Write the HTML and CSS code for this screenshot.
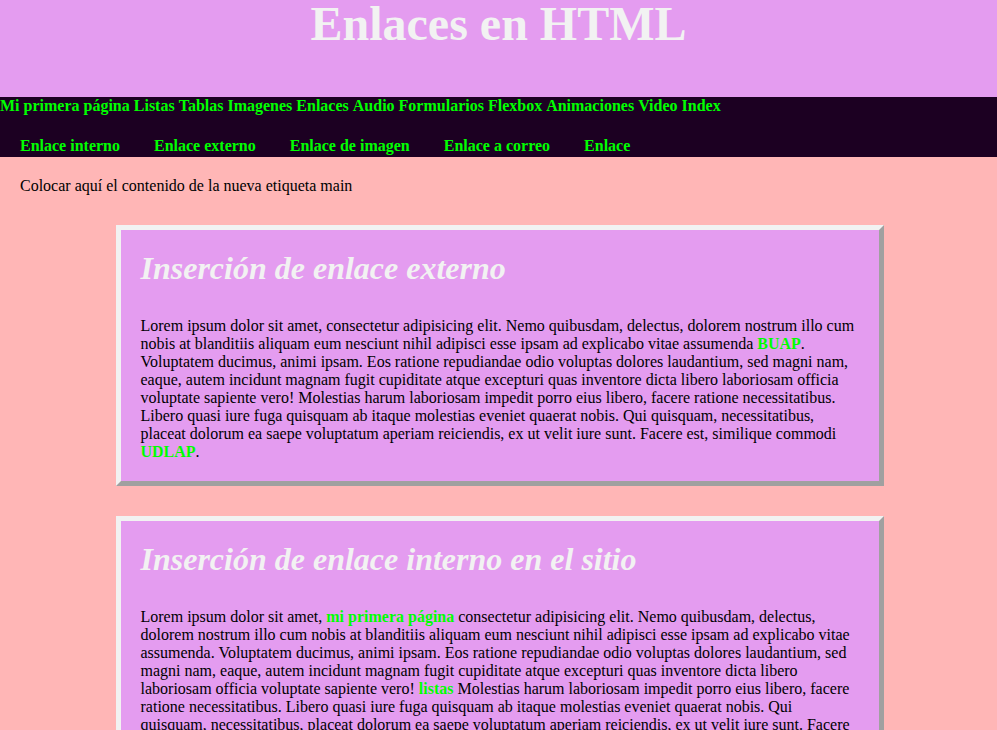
FILE: index.html
```html
<!DOCTYPE html>
<html lang="es">
<head>
<meta charset="utf-8">
<title>Enlaces en HTML</title>
<link rel="stylesheet" href="styles.css">
</head>
<body>
<header class="site-header">
  <h1 class="site-title">Enlaces en HTML</h1>
</header>
<nav class="site-nav">
  <div class="nav-main">
    <a href="#">Mi primera página</a> <a href="#">Listas</a> <a href="#">Tablas</a> <a href="#">Imagenes</a> <a href="#">Enlaces</a> <a href="#">Audio</a> <a href="#">Formularios</a> <a href="#">Flexbox</a> <a href="#">Animaciones</a> <a href="#">Video</a> <a href="#">Index</a>
  </div>
  <ul class="nav-sub">
    <li><a href="#">Enlace interno</a></li>
    <li><a href="#">Enlace externo</a></li>
    <li><a href="#">Enlace de imagen</a></li>
    <li><a href="#">Enlace a correo</a></li>
    <li><a href="#">Enlace</a></li>
  </ul>
</nav>
<main class="content">
  <div class="intro">Colocar aquí el contenido de la nueva etiqueta main</div>
  <article class="card">
    <h2 class="card-title">Inserción de enlace externo</h2>
    <p class="card-text">Lorem ipsum dolor sit amet, consectetur adipisicing elit. Nemo quibusdam, delectus, dolorem nostrum illo cum nobis at blanditiis aliquam eum nesciunt nihil adipisci esse ipsam ad explicabo vitae assumenda <a href="#">BUAP</a>. Voluptatem ducimus, animi ipsam. Eos ratione repudiandae odio voluptas dolores laudantium, sed magni nam, eaque, autem incidunt magnam fugit cupiditate atque excepturi quas inventore dicta libero laboriosam officia voluptate sapiente vero! Molestias harum laboriosam impedit porro eius libero, facere ratione necessitatibus. Libero quasi iure fuga quisquam ab itaque molestias eveniet quaerat nobis. Qui quisquam, necessitatibus, placeat dolorum ea saepe voluptatum aperiam reiciendis, ex ut velit iure sunt. Facere est, similique commodi <a href="#">UDLAP</a>.</p>
  </article>
  <article class="card">
    <h2 class="card-title">Inserción de enlace interno en el sitio</h2>
    <p class="card-text">Lorem ipsum dolor sit amet, <a href="#">mi primera página</a> consectetur adipisicing elit. Nemo quibusdam, delectus, dolorem nostrum illo cum nobis at blanditiis aliquam eum nesciunt nihil adipisci esse ipsam ad explicabo vitae assumenda. Voluptatem ducimus, animi ipsam. Eos ratione repudiandae odio voluptas dolores laudantium, sed magni nam, eaque, autem incidunt magnam fugit cupiditate atque excepturi quas inventore dicta libero laboriosam officia voluptate sapiente vero! <a href="#">listas</a> Molestias harum laboriosam impedit porro eius libero, facere ratione necessitatibus. Libero quasi iure fuga quisquam ab itaque molestias eveniet quaerat nobis. Qui quisquam, necessitatibus, placeat dolorum ea saepe voluptatum aperiam reiciendis, ex ut velit iure sunt. Facere est, similique commodi.</p>
  </article>
</main>
</body>
</html>
```
FILE: styles.css
```css
html, body {
  margin: 0;
  padding: 0;
}
body {
  font-family: "Liberation Serif", "Times New Roman", serif;
  font-size: 16px;
  color: #000;
  background: #ffb6b6;
}
a {
  color: #00ff00;
  font-weight: bold;
  text-decoration: none;
}
.site-header {
  background: #e49cf0;
  height: 97px;
  text-align: center;
}
.site-title {
  margin: 0;
  font-size: 48px;
  line-height: 48px;
  font-weight: bold;
  color: #f2f2f2;
}
.site-nav {
  background: #1c0022;
  height: 60px;
}
.nav-main {
  line-height: 18px;
}
.nav-sub {
  list-style: none;
  margin: 0;
  padding: 22px 0 0 20px;
  display: flex;
  gap: 34px;
  line-height: 18px;
}
.content {
  padding: 20px;
}
.intro {
  line-height: 18px;
}
.card {
  width: 718px;
  margin: 30px auto;
  padding: 20px;
  background: #e49cf0;
  border: 5px solid;
  border-color: #f2f2f2 #a0a0a0 #a0a0a0 #f2f2f2;
  position: relative;
  left: 1px;
}
.card-title {
  margin: 0 0 30px;
  font-size: 32px;
  font-style: italic;
  font-weight: bold;
  color: #f2f2f2;
}
.card-text {
  margin: 0;
}
```
